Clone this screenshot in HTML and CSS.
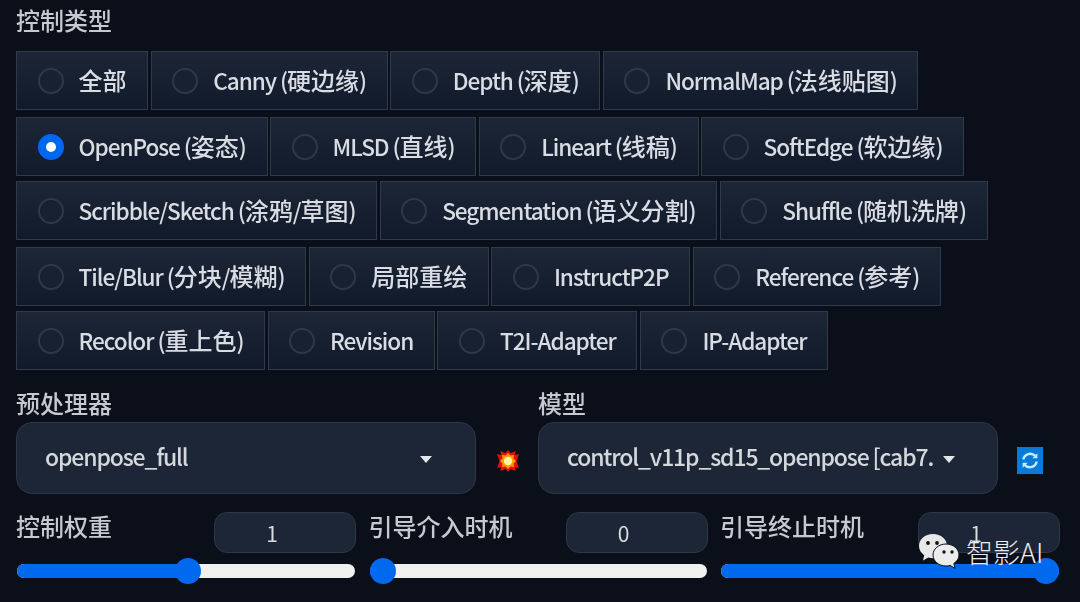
FILE: index.html
```html
<!DOCTYPE html>
<html lang="zh">
<head>
<meta charset="utf-8">
<title>ControlNet</title>
<link rel="stylesheet" href="styles.css">
</head>
<body>
<main class="panel">
  <div class="label type-label">控制类型</div>
  <div class="chips">
    <div class="row">
      <label class="chip"><span class="radio"></span><span>全部</span></label>
      <label class="chip"><span class="radio"></span><span><i>Canny (</i>硬边缘<i>)</i></span></label>
      <label class="chip"><span class="radio"></span><span><i>Depth (</i>深度<i>)</i></span></label>
      <label class="chip"><span class="radio"></span><span><i>NormalMap (</i>法线贴图<i>)</i></span></label>
    </div>
    <div class="row">
      <label class="chip"><span class="radio on"></span><span><i>OpenPose (</i>姿态<i>)</i></span></label>
      <label class="chip"><span class="radio"></span><span><i>MLSD (</i>直线<i>)</i></span></label>
      <label class="chip"><span class="radio"></span><span><i>Lineart (</i>线稿<i>)</i></span></label>
      <label class="chip"><span class="radio"></span><span><i>SoftEdge (</i>软边缘<i>)</i></span></label>
    </div>
    <div class="row">
      <label class="chip"><span class="radio"></span><span><i>Scribble/Sketch (</i>涂鸦<i>/</i>草图<i>)</i></span></label>
      <label class="chip"><span class="radio"></span><span><i>Segmentation (</i>语义分割<i>)</i></span></label>
      <label class="chip"><span class="radio"></span><span><i>Shuffle (</i>随机洗牌<i>)</i></span></label>
    </div>
    <div class="row">
      <label class="chip"><span class="radio"></span><span><i>Tile/Blur (</i>分块<i>/</i>模糊<i>)</i></span></label>
      <label class="chip"><span class="radio"></span><span>局部重绘</span></label>
      <label class="chip"><span class="radio"></span><span><i>InstructP2P</i></span></label>
      <label class="chip"><span class="radio"></span><span><i>Reference (</i>参考<i>)</i></span></label>
    </div>
    <div class="row">
      <label class="chip"><span class="radio"></span><span><i>Recolor (</i>重上色<i>)</i></span></label>
      <label class="chip"><span class="radio"></span><span><i>Revision</i></span></label>
      <label class="chip"><span class="radio"></span><span><i>T2I-Adapter</i></span></label>
      <label class="chip"><span class="radio"></span><span><i>IP-Adapter</i></span></label>
    </div>
  </div>

  <div class="models">
    <div class="field">
      <div class="label">预处理器</div>
      <div class="select"><span class="select-text">openpose_full</span><span class="caret"></span></div>
    </div>
    <svg class="boom" viewBox="0 0 24 24" aria-hidden="true">
      <polygon fill="#e0100a" points="12,1 14.500,4 19.500,2 19,6 23,5 20.500,12 23,19 19,18 19.500,22 14.500,20 12,23 9.500,20 4.500,22 5,18 1,19 3.500,12 1,5 5,6 4.500,2 9.500,4"/>
      <polygon fill="#ff9a00" points="12,4 14.500,6.500 18,6 17.500,9.500 20,12 17.500,14.500 18,18 14.500,17.500 12,20 9.500,17.500 6,18 6.500,14.500 4,12 6.500,9.500 6,6 9.500,6.500"/>
      <circle fill="#fff6a0" cx="12" cy="12" r="4.200"/>
    </svg>
    <div class="field">
      <div class="label">模型</div>
      <div class="select select-model"><span class="select-text">control_v11p_sd15_openpose [cab7.</span><span class="caret"></span></div>
    </div>
    <div class="refresh">
      <svg viewBox="0 0 26 26" aria-hidden="true">
        <path d="M6.300 12A7 7 0 0 1 18.200 8.400" fill="none" stroke="#c8ecff" stroke-width="2.300"/>
        <path d="M20.400 5.800v5h-5z" fill="#c8ecff"/>
        <path d="M19.700 14A7 7 0 0 1 7.800 17.600" fill="none" stroke="#c8ecff" stroke-width="2.300"/>
        <path d="M5.600 20.200v-5h5z" fill="#c8ecff"/>
      </svg>
    </div>
  </div>

  <div class="sliders">
    <div class="slider">
      <div class="slider-head"><span class="label">控制权重</span><span class="num">1</span></div>
      <div class="track"><div class="fill fill-half"></div><span class="thumb thumb-half"></span></div>
    </div>
    <div class="slider">
      <div class="slider-head"><span class="label">引导介入时机</span><span class="num">0</span></div>
      <div class="track"><div class="fill fill-min"></div><span class="thumb thumb-min"></span></div>
    </div>
    <div class="slider">
      <div class="slider-head"><span class="label">引导终止时机</span><span class="num">1</span></div>
      <div class="track"><div class="fill fill-max"></div><span class="thumb thumb-max"></span></div>
    </div>
  </div>
</main>

<div class="mark">
  <svg class="wechat" viewBox="0 0 42 38" aria-hidden="true">
    <path d="M15 1C7 1 1 6.400 1 13c0 3.800 2 7 5.200 9.200L5 27.500l5.300-2.900c1.500.4 3 .6 4.700.6 8 0 14-5.400 14-12.200S23 1 15 1z" fill="#e8e8e8"/>
    <circle cx="10" cy="10" r="1.900" fill="#111"/>
    <circle cx="19" cy="10" r="1.900" fill="#111"/>
    <path d="M28 11c-7.200 0-13 4.900-13 11s5.800 11 13 11c1.500 0 2.900-.2 4.200-.6l4.800 3-1.200-4.900c3-2 5.200-5 5.200-8.500 0-6.100-5.800-11-13-11z" fill="#ececec" stroke="#0b0f19" stroke-width="1"/>
    <circle cx="26" cy="19" r="1.700" fill="#111"/>
    <circle cx="34" cy="19" r="1.700" fill="#111"/>
  </svg>
  <span class="mark-text">智影AI</span>
</div>
</body>
</html>
```
FILE: styles.css
```css
* { box-sizing: border-box; }
html, body { margin: 0; height: 602px; overflow: hidden; }
body {
  background: #0b0f19;
  color: #d9dce2;
  font-family: "Noto Sans CJK SC", "Noto Sans", sans-serif;
  font-size: 24px;
  position: relative;
}
.panel {
  padding: 4px 20px 0 16px;
  filter: blur(0.6px);
}
.label { color: #c6c9cf; font-size: 24px; line-height: 32px; display: block; font-weight: 500; }
.type-label { height: 47px; }

.chips { display: flex; flex-direction: column; }
.row { display: flex; gap: 2.500px; height: 59px; margin-bottom: 7px; }
.row:nth-child(even) { margin-bottom: 5px; }
.chip {
  display: flex;
  align-items: center;
  gap: 15px;
  height: 100%;
  padding: 0 20.700px 3px 20.500px;
  border: 1.500px solid #303a4a;
  background: linear-gradient(180deg, #1c2637 0%, #111a2b 100%);
  white-space: nowrap;
  font-weight: 500;
}
.chip i { font-style: normal; font-size: 22.600px; letter-spacing: -1.050px; }
.radio {
  width: 26px;
  height: 26px;
  border-radius: 50%;
  border: 2px solid #303846;
  background: #182131;
  flex: none;
  margin-top: 3px;
}
.radio.on {
  border: 8.500px solid #0067f0;
  background: #fff;
}

.models { display: flex; align-items: flex-start; margin-top: 9px; }
.field { width: 460px; }
.field .label { height: 36px; padding-top: 1px; }
.select {
  height: 72px;
  border: 1.500px solid #2e3746;
  border-radius: 16px;
  background: #1c2636;
  display: flex;
  align-items: center;
  padding: 0 43px 4px 28px;
  justify-content: space-between;
  font-size: 23px;
  gap: 12px;
}
.select-model { padding-right: 42px; gap: 4px; }
.select-text { overflow: hidden; white-space: nowrap; color: #d4d7dc; letter-spacing: -1.150px; font-weight: 500; }
.caret {
  border-left: 6.500px solid transparent;
  border-right: 6.500px solid transparent;
  border-top: 7px solid #e4e6ea;
  flex: none;
  margin-top: 6px;
}
.boom { width: 24px; height: 24px; margin: 63px 18px 0 20px; flex: none; }
.refresh {
  width: 26px;
  height: 27px;
  margin: 61px 0 0 19px;
  background: #0a7ad8;
  flex: none;
}
.refresh svg { display: block; width: 100%; height: 100%; }

.sliders { display: grid; grid-template-columns: 340px 339px 340px; gap: 12.500px; margin-top: 18px; }
.slider-head { display: flex; justify-content: space-between; align-items: flex-start; height: 52px; }
.slider-head .label { margin-top: -2px; }
.num {
  width: 142px;
  height: 41px;
  padding: 0 26px 0 0;
  border: 1.500px solid #2e3746;
  border-radius: 13px;
  background: #1c2636;
  display: flex;
  align-items: center;
  justify-content: center;
  font-size: 21px;
}
.track {
  position: relative;
  height: 14px;
  margin: 0 1px;
  border-radius: 7px;
  background: #f0f0f0;
}
.fill { height: 100%; border-radius: 7px; background: #0069ee; }
.fill-half { width: 51%; }
.fill-min { width: 4%; }
.fill-max { width: 100%; }
.thumb {
  position: absolute;
  top: -6px;
  width: 26px;
  height: 26px;
  border-radius: 50%;
  background: #0069ee;
}
.thumb-half { left: 158px; }
.thumb-min { left: 0; }
.thumb-max { right: 0; }

.mark {
  position: absolute;
  left: 918px;
  top: 533px;
  display: flex;
  align-items: flex-start;
  gap: 6px;
}
.wechat { width: 42px; height: 38px; display: block; }
.mark-text {
  color: #ececec;
  font-size: 27px;
  font-weight: 300;
  line-height: 38px;
}
```
